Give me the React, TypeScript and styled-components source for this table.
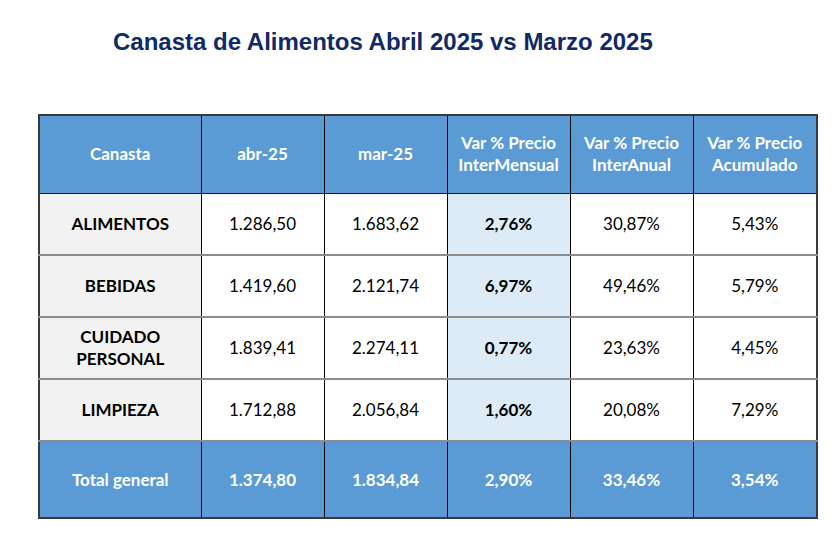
import styled, { createGlobalStyle } from "styled-components";

const GlobalStyle = createGlobalStyle`
  html, body {
    margin: 0;
    padding: 0;
    background: #ffffff;
  }
`;

type Row = {
  name: string[];
  abr: string;
  mar: string;
  mensual: string;
  anual: string;
  acumulado: string;
};

const rows: Row[] = [
  { name: ["ALIMENTOS"], abr: "1.286,50", mar: "1.683,62", mensual: "2,76%", anual: "30,87%", acumulado: "5,43%" },
  { name: ["BEBIDAS"], abr: "1.419,60", mar: "2.121,74", mensual: "6,97%", anual: "49,46%", acumulado: "5,79%" },
  { name: ["CUIDADO", "PERSONAL"], abr: "1.839,41", mar: "2.274,11", mensual: "0,77%", anual: "23,63%", acumulado: "4,45%" },
  { name: ["LIMPIEZA"], abr: "1.712,88", mar: "2.056,84", mensual: "1,60%", anual: "20,08%", acumulado: "7,29%" },
];

const headers = [
  ["Canasta"],
  ["abr-25"],
  ["mar-25"],
  ["Var % Precio", "InterMensual"],
  ["Var % Precio", "InterAnual"],
  ["Var % Precio", "Acumulado"],
];

const widths = [162, 123, 123, 123, 123, 124];

function Lines({ parts }: { parts: string[] }) {
  return (
    <>
      {parts.map((p, i) => (
        <span key={i}>
          {p}
          {i < parts.length - 1 && <br />}
        </span>
      ))}
    </>
  );
}

function App() {
  return (
    <Page>
      <GlobalStyle />
      <Title>Canasta de Alimentos Abril 2025 vs Marzo 2025</Title>
      <Table>
        <colgroup>
          {widths.map((w, i) => (
            <col key={i} style={{ width: w }} />
          ))}
        </colgroup>
        <thead>
          <HeadRow>
            {headers.map((h, i) => (
              <HeadCell key={i}>
                <Lines parts={h} />
              </HeadCell>
            ))}
          </HeadRow>
        </thead>
        <tbody>
          {rows.map((r) => (
            <BodyRow key={r.name.join(" ")}>
              <LabelCell>
                <Lines parts={r.name} />
              </LabelCell>
              <Cell>{r.abr}</Cell>
              <Cell>{r.mar}</Cell>
              <Cell $highlight>{r.mensual}</Cell>
              <Cell>{r.anual}</Cell>
              <Cell>{r.acumulado}</Cell>
            </BodyRow>
          ))}
          <TotalRow>
            <TotalCell>Total general</TotalCell>
            <TotalCell>1.374,80</TotalCell>
            <TotalCell>1.834,84</TotalCell>
            <TotalCell>2,90%</TotalCell>
            <TotalCell>33,46%</TotalCell>
            <TotalCell>3,54%</TotalCell>
          </TotalRow>
        </tbody>
      </Table>
    </Page>
  );
}

const Page = styled.div`
  width: 840px;
  height: 546px;
  display: flex;
  flex-direction: column;
  padding: 28px 0 0 38px;
  box-sizing: border-box;
`;

const Title = styled.h1`
  margin: 0 0 58px 75px;
  font-family: "Liberation Sans", Arial, sans-serif;
  font-size: 24px;
  font-weight: bold;
  color: #0f2a66;
  line-height: 28px;
`;

const Table = styled.table`
  border-collapse: collapse;
  table-layout: fixed;
  width: 778px;
  font-family: Lato, "Open Sans", sans-serif;
  font-size: 17px;
  color: #000000;
  border: 2px solid #3a3a3a;
`;

const HeadRow = styled.tr`
  height: 78px;
`;

const BodyRow = styled.tr`
  height: 62px;
`;

const TotalRow = styled.tr`
  height: 77px;
`;

const BaseCell = styled.td`
  text-align: center;
  vertical-align: middle;
  padding: 0 2px;
  border-left: 1px solid #000000;
  border-right: 1px solid #000000;
  line-height: 22px;
  white-space: nowrap;
`;

const HeadCell = styled(BaseCell).attrs({ as: "th" })`
  background: #5b9bd5;
  color: #ffffff;
  font-weight: bold;
  border-bottom: 1px solid #1a1a1a;
`;

const Cell = styled(BaseCell)<{ $highlight?: boolean }>`
  background: ${(p) => (p.$highlight ? "#ddebf7" : "#ffffff")};
  font-weight: ${(p) => (p.$highlight ? "bold" : "normal")};
  border-bottom: 2px solid #8c8c8c;
`;

const LabelCell = styled(BaseCell)`
  background: #f2f2f2;
  font-weight: bold;
  border-bottom: 2px solid #8c8c8c;
`;

const TotalCell = styled(BaseCell)`
  background: #5b9bd5;
  color: #ffffff;
  font-weight: bold;
  border-top: 2px solid #555555;
`;

export default App;
